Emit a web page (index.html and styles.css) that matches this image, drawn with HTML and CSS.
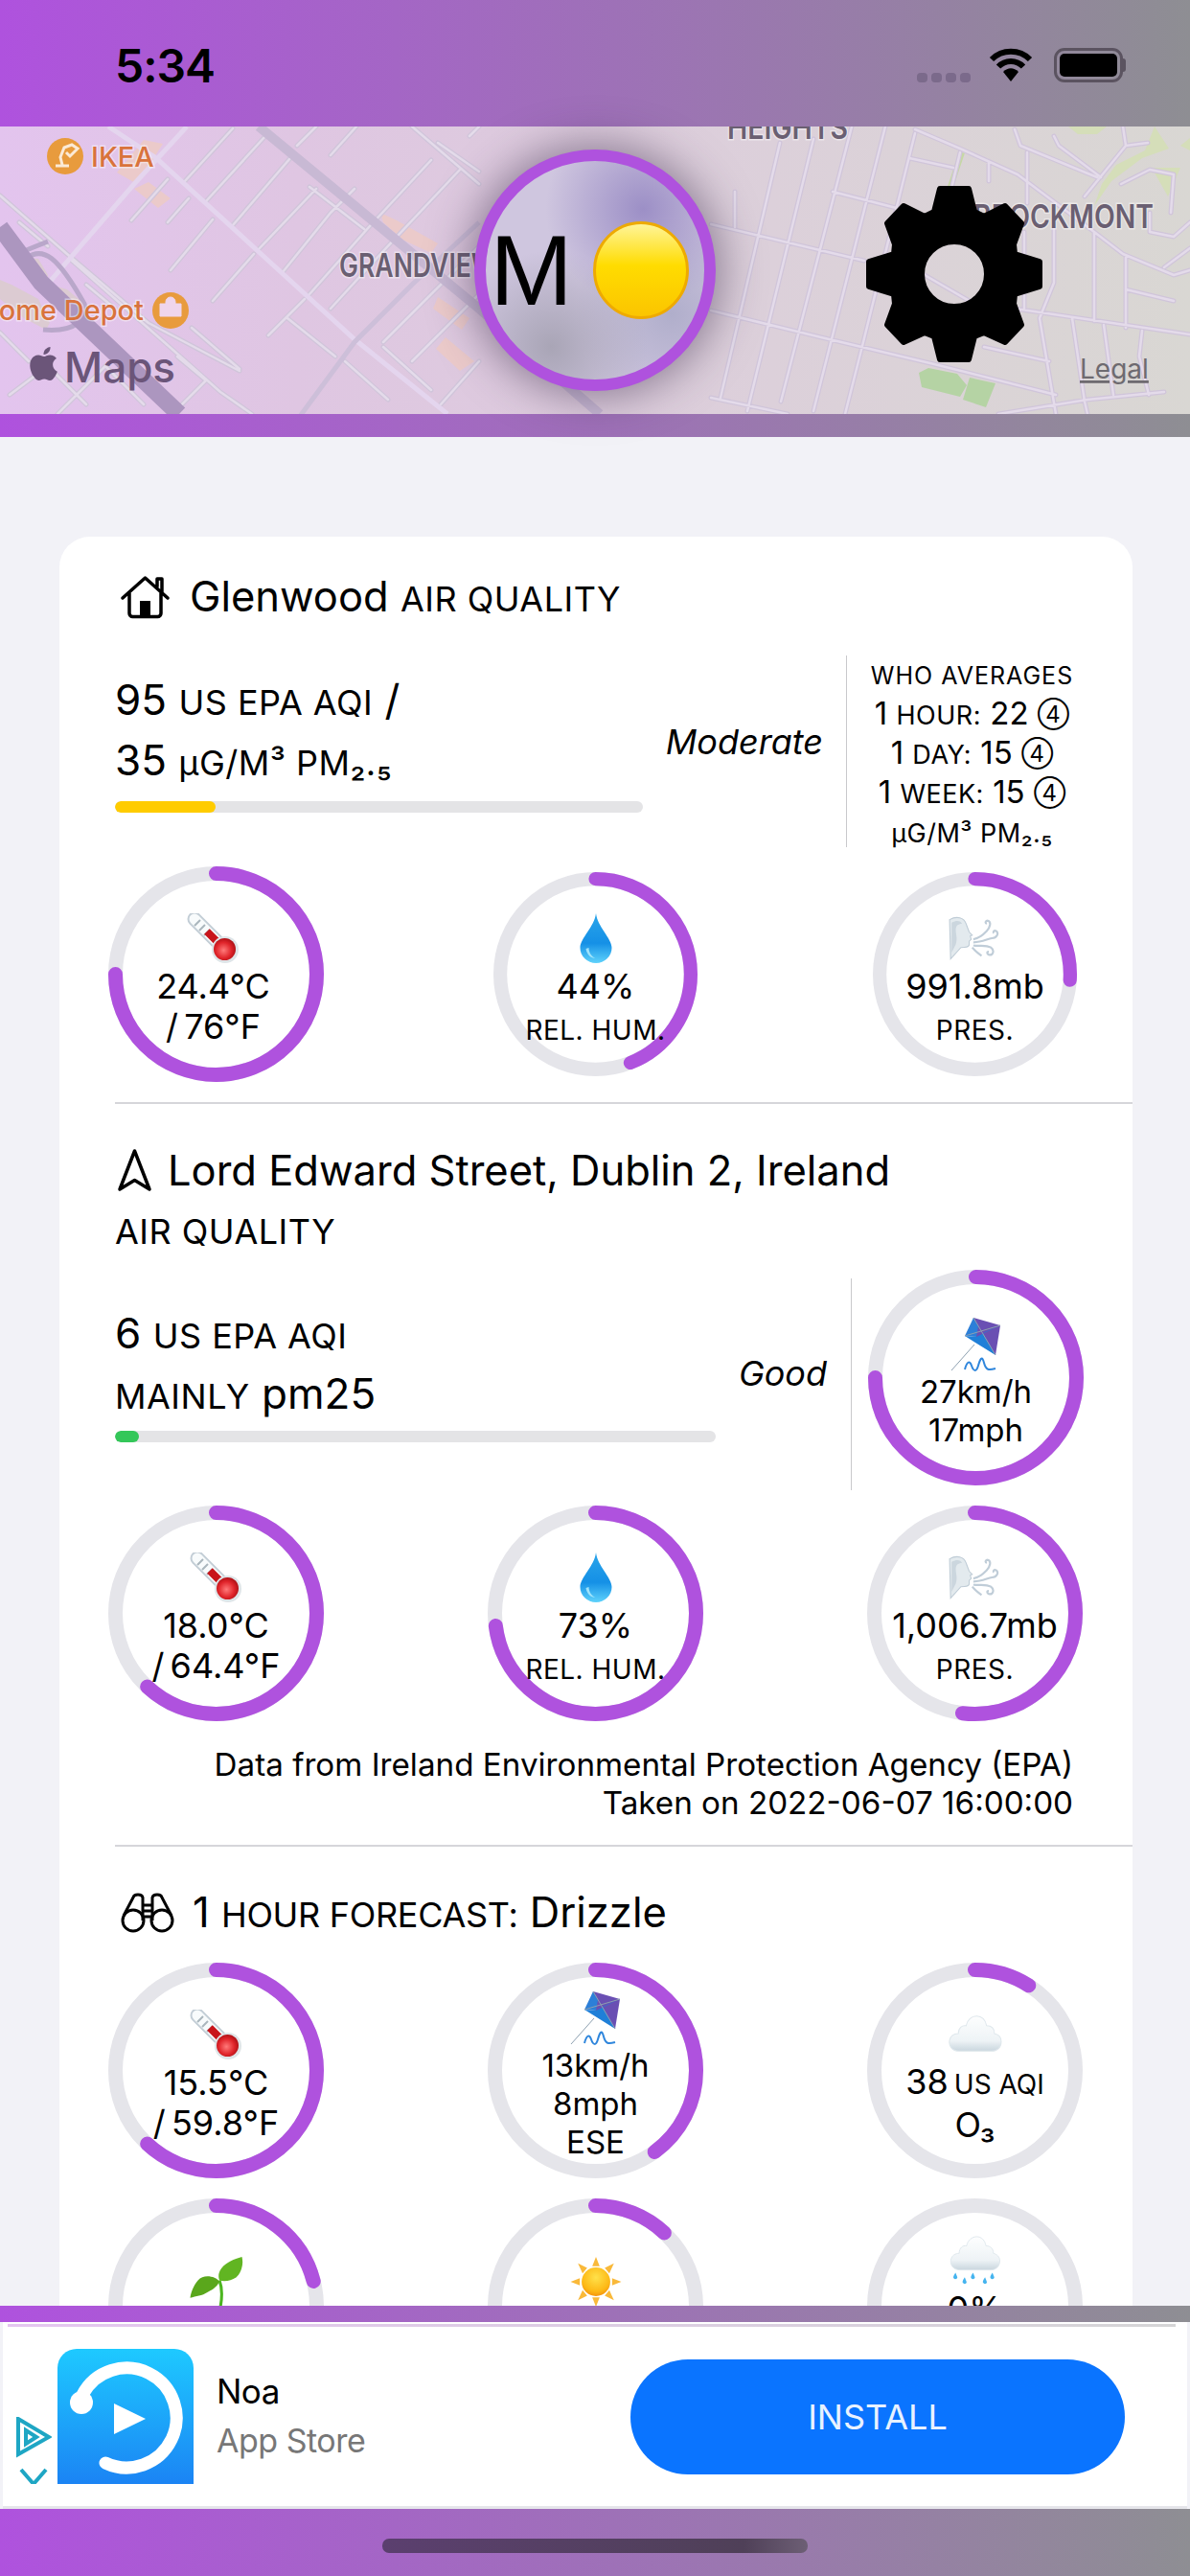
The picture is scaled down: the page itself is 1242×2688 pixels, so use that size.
FILE: index.html
```html
<!DOCTYPE html>
<html lang="en">
<head>
    <meta charset="UTF-8">
    <meta name="viewport" content="width=device-width, initial-scale=1.0">
    <title>Air Quality</title>
    <link rel="stylesheet" href="styles.css">
</head>
<body>
    <!-- shared icons -->
    <svg class="sprite" width="0" height="0">
        <defs>
            <linearGradient id="drop-fill" x1="0" y1="0" x2="0" y2="1"><stop offset="0" stop-color="#2aa5ea"/><stop offset="0.6" stop-color="#1590e6"/><stop offset="1" stop-color="#5fd2fb"/></linearGradient>
            <radialGradient id="bulb-fill" cx="0.45" cy="0.55" r="0.6"><stop offset="0" stop-color="#ff7a7a"/><stop offset="0.6" stop-color="#e0242a"/><stop offset="1" stop-color="#a50d12"/></radialGradient>
            <linearGradient id="cloud-fill" x1="0" y1="0" x2="0" y2="1"><stop offset="0" stop-color="#fdfefe"/><stop offset="0.7" stop-color="#eef3f6"/><stop offset="1" stop-color="#c9d6de"/></linearGradient>
            <radialGradient id="sun-fill" cx="0.5" cy="0.35" r="0.7"><stop offset="0" stop-color="#ffe14a"/><stop offset="0.7" stop-color="#fdb815"/><stop offset="1" stop-color="#f28a0c"/></radialGradient>
            <linearGradient id="moon-fill" x1="0" y1="0" x2="0" y2="1"><stop offset="0" stop-color="#fff59d"/><stop offset="0.45" stop-color="#ffdc00"/><stop offset="1" stop-color="#fbc400"/></linearGradient>
            <linearGradient id="noa-fill" x1="0" y1="0" x2="0" y2="1"><stop offset="0" stop-color="#1ec9ff"/><stop offset="1" stop-color="#1b84f4"/></linearGradient>
            <path id="streets" d="M137 98 175 55M175 100 197 75M192 58 243 2M215 78 277 10M243 103 303 33M270 128 330 65M178 150 222 97M222 182 265 133M295 152 345 90 370 65M323 175 385 105 450 35M345 190 400 130 480 45M280 218 318 180M310 20 330 0M345 30 372 0M400 225 460 165 500 125M430 245 500 175M460 290 500 245M490 10 500 0
                M0 72 70 133 155 205 250 255M75 140 177 230 230 277 263 300M200 210 250 253M300 200 350 240M323 63 380 107M457 17 500 47M430 0 500 60M20 100 50 125M90 165 120 190M0 215 30 245M10 280 50 250 90 290M60 300 110 250 150 290M185 240 215 265 180 300M400 230 450 275M360 245 405 285
                M814 17 752 283M849 13 780 297M889 0 815 287M924 0 849 297M955 7 899 233 882 300M1002 27 987 90M767 68 767 105
                M742 102 902 140M965 155 1060 210M742 192 857 220 975 248 1102 280M742 283 822 300M869 68 955 90M949 33 995 43M955 3 1002 23 1062 50 1142 110 1172 133 1225 155 1242 150
                M1059 3 1065 20 1145 53M1100 10 1105 20 1149 53M1172 0 1175 20 1132 73M1175 20 1198 17M1032 37 1032 57M1072 27 1072 80M1142 110 1142 203M1175 137 1175 210M1100 107 1100 163 1085 200 1102 300M1069 110 1069 190M1059 190 1242 217M1175 170 1225 182M1027 230 1095 245M1042 300 1135 285 1215 277M1119 200 1132 287 1135 300M1152 207 1162 280M1192 213 1189 240 1199 280M1215 147 1242 127M1170 60 1200 45 1225 50 1222 90M1200 90 1200 110 1225 115 1242 100"/>

            <symbol id="i-thermo" viewBox="0 0 52 52">
                <path d="M6 6 38 38" stroke="#c3ced6" stroke-width="15" stroke-linecap="round"/>
                <path d="M6 6 38 38" stroke="#f8fbfc" stroke-width="11" stroke-linecap="round"/>
                <path d="M6 13l6-6M11 18l6-6M16 23l6-6" stroke="#aab6bd" stroke-width="2"/>
                <path d="M19 19 38 38" stroke="#c8141b" stroke-width="8"/>
                <circle cx="38" cy="38" r="14" fill="#dfe5e8"/>
                <circle cx="37.500" cy="37.500" r="11.500" fill="url(#bulb-fill)"/>
            </symbol>
            <symbol id="i-drop" viewBox="0 0 33 52">
                <path fill="url(#drop-fill)" d="M16.500 0C18 14 33 26 33 36A16.500 16 0 0 1 0 36C0 26 15 14 16.500 0Z"/>
                <path fill="#9fe3fb" d="M6 37c1 6 5 10 10 10-4-2-7-6-7-11z"/>
            </symbol>
            <symbol id="i-wind" viewBox="0 0 52 42">
                <path fill="#e3eaee" stroke="#bfccd6" d="M1 3C8-1 15 1 17 7c1 3 2 5 3 8l3 3-2 1 1 3-2 2v3c0 3-4 3-8 3L2 41z"/>
                <path fill="#cbd6de" d="M3 6c5-3 9-2 10 1-4 0-6 2-6 6s2 8 0 14l-4 8z"/>
                <path fill="none" stroke="#c0cdd8" stroke-width="2" d="M24 22c6-1 9-4 13-8 3-3 5-9 1-10-2 0-3 2-1 3M24 25c8 0 13-3 18-4 5 0 7-5 4-7-2-1-3 1-2 2M24 28c6 1 12-1 17 2 4 3 2 8-2 7-2-1-2-3 0-3M23 30c3 4 6 6 9 8"/>
            </symbol>
            <symbol id="i-kite" viewBox="0 0 52 56">
                <path fill="#6a4fb3" d="M23 0 51 8 46 39 26 20z"/>
                <path fill="#2c7fd8" d="M23 0 14 19 26 20 28 9z"/>
                <path fill="#1f7fd8" d="M14 19 46 39 33 16 51 8 26 20z"/>
                <path stroke="#8da0b0" stroke-width="1" fill="none" d="M24 28 0 55M23 0 46 39M14 19 51 8"/>
                <path fill="none" stroke="#2f86dc" stroke-width="2" d="M14 54c2-8 5-10 7-4s5 7 7 0 4-11 6-3 5 8 12 6"/>
            </symbol>
            <symbol id="i-cloud" viewBox="0 0 55 38">
                <path fill="url(#cloud-fill)" stroke="#dfe7ec" d="M11 37C3 37 0 31 1 26c1-5 5-7 9-7 0-6 4-9 8-8 1-6 6-10 11-10s9 4 10 10c5 0 8 3 8 8 4 1 7 4 7 8 0 6-4 10-10 10z"/>
            </symbol>
            <symbol id="i-rain" viewBox="0 0 55 54">
                <path fill="url(#cloud-fill)" stroke="#dfe7ec" d="M11 37C3 37 0 31 1 26c1-5 5-7 9-7 0-6 4-9 8-8 1-6 6-10 11-10s9 4 10 10c5 0 8 3 8 8 4 1 7 4 7 8 0 6-4 10-10 10z"/>
                <path fill="#45b4ef" d="M6 40c-2 3-3 5-2 6 1 2 4 1 4-1zM16 45c-2 3-3 5-2 6 1 2 4 1 4-1zM25 40c-2 3-3 5-2 6 1 2 4 1 4-1zM38 45c-2 3-3 5-2 6 1 2 4 1 4-1zM46 40c-2 3-3 5-2 6 1 2 4 1 4-1z"/>
            </symbol>
            <symbol id="i-sprout" viewBox="0 0 54 51">
                <path fill="none" stroke="#4bb51f" stroke-width="3" d="M31 51C33 40 33 32 30 24"/>
                <path fill="#5aa71c" d="M30 25C26 20 14 17 8 24 3 30 1 36 0 42c6-2 12-2 18-6 6-3 10-6 12-11z"/>
                <path fill="#61b522" d="M30 24c-3-7 1-18 23-24 2 8-1 17-6 21-5 3-11 5-17 3z"/>
            </symbol>
            <symbol id="i-sun" viewBox="0 0 55 54">
                <path fill="#f9b93a" d="M27.500 0l4 10h-8zM27.500 54l4-10h-8zM0 27l10-4v8zM55 27l-10-4v8zM8 7l10 5-5 6zM47 7l-10 5 5 6zM8 47l10-5-5-6zM47 47l-10-5 5-6z"/>
                <circle cx="27.500" cy="27" r="15.500" fill="url(#sun-fill)"/>
            </symbol>
        </defs>
    </svg>

    <div class="phone">
        <header class="status-bar">
            <span class="clock">5:34</span>
            <div class="status-icons">
                <div class="signal"><i></i><i></i><i></i><i></i></div>
                <svg class="wifi" viewBox="0 0 46 36">
                    <path d="M3 12C14 1 32 1 43 12M10 19.500C17 12 29 12 36 19.500" fill="none" stroke="#000" stroke-width="6"/>
                    <path d="M15 25C20 20 26 20 31 25L23 35Z" fill="#000"/>
                </svg>
                <div class="battery"><div class="battery-level"></div></div>
                <div class="battery-cap"></div>
            </div>
        </header>

        <section class="map-header">
            <svg class="map-art" viewBox="0 0 1242 300">
                <!-- parks and building patches -->
                <path class="park-pale" d="M1115 0H1155L1145 8H1125ZM1205 0 1220 23 1192 33 1160 57 1142 83 1150 60 1165 40 1195 25ZM1202 43H1232L1219 73ZM1232 20 1242 12V25Z"/>
                <path d="M1004 27 992 63" stroke="#c6d8a5" stroke-width="6"/>
                <path class="park" d="M959 257 969 252 999 258 1009 270 1002 282 962 272ZM1012 262 1039 268 1029 293 1005 285Z"/>
                <path class="patch" d="M122 48 150 14 170 18 143 60ZM140 65 155 58 178 75 165 85ZM397 90 414 98 457 122 450 132 420 118 400 100ZM457 178 490 200 482 212 452 190ZM465 220 495 245 480 255 455 232Z"/>
                <path d="M28 137 40 138 50 155 48 165 35 155ZM52 165 70 170 88 185 75 205 60 190ZM0 160 12 165 40 180 52 205 48 212 25 200 0 180Z" fill="#dccbd2"/>
                <!-- streets -->
                <use href="#streets" class="road-edge"/>
                <use href="#streets" class="road-fill"/>
                <path class="road-wide" d="M113 0 163 33 267 128 370 222 467 300"/>
                <path class="road-wide" d="M45 170 140 60 195 0"/>
                <path class="road-mid" d="M300 320 370 225 430 165 500 100"/>
                <path class="road-ring" d="M28 137C45 125 60 135 88 185 92 200 80 215 45 212M25 130 50 120"/>
                <path class="road-highway" d="M270 0 500 190 626 300"/>
                <path class="road-freeway" d="M0 105 43 163 187 300"/>
                <!-- labels -->
                <circle cx="68" cy="31" r="19" fill="#e89b3d"/>
                <path d="M58 41h14M65 40l-2-8 4-10 8-3 6 4-8 8-4-4" fill="none" stroke="#fbead6" stroke-width="3"/>
                <text class="label poi" x="95" y="42">IKEA</text>
                <text class="label poi" x="150" y="202" text-anchor="end">Home Depot</text>
                <circle cx="178" cy="192" r="19" fill="#e89b3d"/>
                <path d="M167 185h22v13h-22zM173 185v-2a5 5 0 0 1 10 0v2" fill="#efd5ec" stroke="#efd5ec" stroke-width="1"/>
                <text class="label place" x="354" y="157" textLength="165" lengthAdjust="spacingAndGlyphs">GRANDVIEW</text>
                <text class="label place" x="759" y="13" textLength="126" lengthAdjust="spacingAndGlyphs">HEIGHTS</text>
                <text class="label place" x="1016" y="106" textLength="188" lengthAdjust="spacingAndGlyphs">BROCKMONT</text>
                <g class="maps-mark">
                    <svg x="26" y="228" width="41" height="41" viewBox="0 0 24 24"><path d="M17.050 12.040c-.03-2.600 2.120-3.850 2.220-3.910-1.210-1.770-3.090-2.010-3.760-2.040-1.600-.16-3.120.94-3.930.94-.81 0-2.060-.92-3.390-.89-1.740.03-3.350 1.010-4.250 2.570-1.810 3.140-.46 7.800 1.300 10.350.86 1.250 1.890 2.650 3.240 2.600 1.300-.05 1.790-.84 3.360-.84 1.570 0 2.010.84 3.390.81 1.400-.02 2.280-1.270 3.140-2.530.99-1.450 1.390-2.850 1.420-2.920-.03-.01-2.720-1.040-2.740-4.140zM14.460 4.400c.72-.87 1.200-2.080 1.070-3.280-1.030.04-2.280.69-3.020 1.560-.66.77-1.240 2-1.090 3.180 1.150.09 2.320-.58 3.040-1.460z"/></svg>
                    <text x="67" y="267">Maps</text>
                </g>
                <text class="legal" x="1127" y="263">Legal</text>
            </svg>
            <div class="avatar">
                <span class="avatar-letter">M</span>
                <svg class="moon" viewBox="0 0 100 102"><ellipse cx="50" cy="51" rx="48.500" ry="49.500" fill="url(#moon-fill)" stroke="#eeaa00" stroke-width="3"/></svg>
            </div>
            <svg class="gear" viewBox="-93 -93 186 186">
                <path fill-rule="evenodd" stroke="#000" stroke-width="6" stroke-linejoin="round" d="M-21-65-15-89 15-89 21-65 31-60 53-71 70-53 62-31 63-21 89-13 89 13 63 21 62 31 70 53 53 71 31 61 21 65 15 89-15 89-21 65-31 61-53 71-70 53-62 31-63 21-89 13-89-13-63-21-62-31-70-53-53-71-31-60ZM34 0A34 34 0 1 0-34 0 34 34 0 1 0 34 0Z"/>
            </svg>
        </section>
        <div class="band band-map"></div>

        <main class="content">
            <div class="card">
                <section class="block">
                    <h2 class="block-title">
                        <svg class="icon-house" viewBox="0 0 51 46"><path d="M2 24 25.500 3 49 24M38 12V4h5v14M9 19V40a3.500 3.500 0 0 0 3.500 3.500h26A3.500 3.500 0 0 0 42 40V19" fill="none" stroke="#000" stroke-width="3.500" stroke-linecap="round" stroke-linejoin="round"/><rect x="20" y="27" width="11" height="16" fill="#000"/></svg>
                        <span>Glenwood <span class="sc">AIR QUALITY</span></span>
                    </h2>
                    <div class="aqi-row aqi-row-who">
                        <div class="aqi-main">
                            <div class="aqi-figures">
                                <p class="aqi-line">95 <span class="sc">US EPA AQI</span> /</p>
                                <p class="aqi-line">35 <span class="sc">µG/M³ PM₂.₅</span></p>
                                <div class="meter"><div class="meter-fill fill-moderate" style="width: 19%"></div></div>
                            </div>
                            <em class="rating">Moderate</em>
                        </div>
                        <div class="who">
                            <div class="who-title">WHO AVERAGES</div>
                            <div>1 <span class="sc">HOUR:</span> 22 <span class="circled">④</span></div>
                            <div>1 <span class="sc">DAY:</span> 15 <span class="circled">④</span></div>
                            <div>1 <span class="sc">WEEK:</span> 15 <span class="circled">④</span></div>
                            <div class="who-unit sc">µG/M³ PM₂.₅</div>
                        </div>
                    </div>
                    <div class="gauges gauges-first">
                        <div class="gauge">
                            <svg class="ring" viewBox="0 0 225 225"><circle class="track" cx="112.500" cy="112.500" r="105"/><circle class="value" cx="112.500" cy="112.500" r="105" pathLength="100" stroke-dasharray="75 100" transform="rotate(-90 112.500 112.500)"/></svg>
                            <div class="gauge-body gauge-body-left"><svg class="emoji"><use href="#i-thermo"/></svg><div>24.4°C</div><div>/ 76°F</div></div>
                        </div>
                        <div class="gauge gauge-small">
                            <svg class="ring" viewBox="0 0 225 225"><circle class="track" cx="112.500" cy="112.500" r="105"/><circle class="value" cx="112.500" cy="112.500" r="105" pathLength="100" stroke-dasharray="44 100" transform="rotate(-90 112.500 112.500)"/></svg>
                            <div class="gauge-body"><svg class="emoji"><use href="#i-drop"/></svg><div>44%</div><div class="gauge-label">REL. HUM.</div></div>
                        </div>
                        <div class="gauge gauge-small">
                            <svg class="ring" viewBox="0 0 225 225"><circle class="track" cx="112.500" cy="112.500" r="105"/><circle class="value" cx="112.500" cy="112.500" r="105" pathLength="100" stroke-dasharray="26 100" transform="rotate(-90 112.500 112.500)"/></svg>
                            <div class="gauge-body"><svg class="emoji"><use href="#i-wind"/></svg><div>991.8mb</div><div class="gauge-label">PRES.</div></div>
                        </div>
                    </div>
                </section>

                <section class="block">
                    <h2 class="block-title">
                        <svg class="icon-arrow" viewBox="0 0 37 46"><path d="M18.500 3 34 43 18.500 33.500 3 43Z" fill="none" stroke="#000" stroke-width="3.500" stroke-linejoin="round"/></svg>
                        <span>Lord Edward Street, Dublin 2, Ireland</span>
                    </h2>
                    <div class="block-sub sc">AIR QUALITY</div>
                    <div class="aqi-row aqi-row-wind">
                        <div class="aqi-main">
                            <div class="aqi-figures aqi-figures-wide">
                                <p class="aqi-line">6 <span class="sc">US EPA AQI</span></p>
                                <p class="aqi-line"><span class="sc">MAINLY</span> pm25</p>
                                <div class="meter"><div class="meter-fill fill-good" style="width: 4%"></div></div>
                            </div>
                            <em class="rating">Good</em>
                        </div>
                        <div class="gauge gauge-wind">
                            <svg class="ring" viewBox="0 0 225 225"><circle class="track" cx="112.500" cy="112.500" r="105"/><circle class="value" cx="112.500" cy="112.500" r="105" pathLength="100" stroke-dasharray="75 100" transform="rotate(-90 112.500 112.500)"/></svg>
                            <div class="gauge-body tight"><svg class="emoji emoji-tall"><use href="#i-kite"/></svg><div>27km/h</div><div>17mph</div></div>
                        </div>
                    </div>
                    <div class="gauges">
                        <div class="gauge">
                            <svg class="ring" viewBox="0 0 225 225"><circle class="track" cx="112.500" cy="112.500" r="105"/><circle class="value" cx="112.500" cy="112.500" r="105" pathLength="100" stroke-dasharray="62 100" transform="rotate(-90 112.500 112.500)"/></svg>
                            <div class="gauge-body"><svg class="emoji"><use href="#i-thermo"/></svg><div>18.0°C</div><div>/ 64.4°F</div></div>
                        </div>
                        <div class="gauge">
                            <svg class="ring" viewBox="0 0 225 225"><circle class="track" cx="112.500" cy="112.500" r="105"/><circle class="value" cx="112.500" cy="112.500" r="105" pathLength="100" stroke-dasharray="73 100" transform="rotate(-90 112.500 112.500)"/></svg>
                            <div class="gauge-body"><svg class="emoji"><use href="#i-drop"/></svg><div>73%</div><div class="gauge-label">REL. HUM.</div></div>
                        </div>
                        <div class="gauge">
                            <svg class="ring" viewBox="0 0 225 225"><circle class="track" cx="112.500" cy="112.500" r="105"/><circle class="value" cx="112.500" cy="112.500" r="105" pathLength="100" stroke-dasharray="52 100" transform="rotate(-90 112.500 112.500)"/></svg>
                            <div class="gauge-body"><svg class="emoji"><use href="#i-wind"/></svg><div>1,006.7mb</div><div class="gauge-label">PRES.</div></div>
                        </div>
                    </div>
                    <p class="source">Data from Ireland Environmental Protection Agency (EPA)<br>Taken on 2022-06-07 16:00:00</p>
                </section>

                <section class="block block-forecast">
                    <h2 class="block-title">
                        <svg class="icon-binoculars" viewBox="0 0 56 42"><g fill="none" stroke="#000" stroke-width="3"><circle cx="13" cy="29" r="11"/><circle cx="43" cy="29" r="11"/><path d="M3 24 13 5c1-4 9-4 10 0v24M53 24 43 5c-1-4-9-4-10 0v24M23 13h10M23 19h10M23 25h10"/></g></svg>
                        <span>1 <span class="sc sc-tight">HOUR FORECAST:</span> Drizzle</span>
                    </h2>
                    <div class="gauges">
                        <div class="gauge">
                            <svg class="ring" viewBox="0 0 225 225"><circle class="track" cx="112.500" cy="112.500" r="105"/><circle class="value" cx="112.500" cy="112.500" r="105" pathLength="100" stroke-dasharray="62 100" transform="rotate(-90 112.500 112.500)"/></svg>
                            <div class="gauge-body"><svg class="emoji"><use href="#i-thermo"/></svg><div>15.5°C</div><div>/ 59.8°F</div></div>
                        </div>
                        <div class="gauge">
                            <svg class="ring" viewBox="0 0 225 225"><circle class="track" cx="112.500" cy="112.500" r="105"/><circle class="value" cx="112.500" cy="112.500" r="105" pathLength="100" stroke-dasharray="40 100" transform="rotate(-90 112.500 112.500)"/></svg>
                            <div class="gauge-body tight"><svg class="emoji emoji-tall"><use href="#i-kite"/></svg><div>13km/h</div><div>8mph</div><div>ESE</div></div>
                        </div>
                        <div class="gauge">
                            <svg class="ring" viewBox="0 0 225 225"><circle class="track" cx="112.500" cy="112.500" r="105"/><circle class="value" cx="112.500" cy="112.500" r="105" pathLength="100" stroke-dasharray="9 100" transform="rotate(-90 112.500 112.500)"/></svg>
                            <div class="gauge-body"><svg class="emoji"><use href="#i-cloud"/></svg><div>38 <span class="sc-small">US AQI</span></div><div>O₃</div></div>
                        </div>
                    </div>
                    <div class="gauges">
                        <div class="gauge">
                            <svg class="ring" viewBox="0 0 225 225"><circle class="track" cx="112.500" cy="112.500" r="105"/><circle class="value" cx="112.500" cy="112.500" r="105" pathLength="100" stroke-dasharray="21 100" transform="rotate(-90 112.500 112.500)"/></svg>
                            <div class="gauge-body gauge-body-low"><svg class="emoji"><use href="#i-sprout"/></svg></div>
                        </div>
                        <div class="gauge">
                            <svg class="ring" viewBox="0 0 225 225"><circle class="track" cx="112.500" cy="112.500" r="105"/><circle class="value" cx="112.500" cy="112.500" r="105" pathLength="100" stroke-dasharray="12 100" transform="rotate(-90 112.500 112.500)"/></svg>
                            <div class="gauge-body gauge-body-low"><svg class="emoji"><use href="#i-sun"/></svg></div>
                        </div>
                        <div class="gauge">
                            <svg class="ring" viewBox="0 0 225 225"><circle class="track" cx="112.500" cy="112.500" r="105"/></svg>
                            <div class="gauge-body gauge-body-high"><svg class="emoji"><use href="#i-rain"/></svg><div>0%</div></div>
                        </div>
                    </div>
                </section>
            </div>
        </main>

        <div class="band band-ad"></div>
        <aside class="ad">
            <div class="ad-rule"></div>
            <div class="ad-creative">
                <svg class="ad-choices" viewBox="0 0 38 70">
                    <g fill="none" stroke="#1ea6c4" stroke-width="4"><path d="M3 2 35 21 3 39ZM11 14V28L22 21Z"/><path d="M6 55 19 70 32 55"/></g>
                </svg>
                <svg class="ad-icon" viewBox="0 0 142 141">
                    <path d="M0 141V20A20 20 0 0 1 20 0H122A20 20 0 0 1 142 20V141Z" fill="url(#noa-fill)"/>
                    <path d="M26 48A52 52 0 1 1 50 119" fill="none" stroke="#fff" stroke-width="13" stroke-linecap="round"/>
                    <circle cx="25" cy="56" r="12" fill="#fff"/>
                    <path d="M59 57 92 73 59 89Z" fill="#fff"/>
                </svg>
                <div class="ad-copy">
                    <div class="ad-name">Noa</div>
                    <div class="ad-store">App Store</div>
                </div>
                <button class="ad-install">INSTALL</button>
            </div>
        </aside>
        <footer class="home-band"><div class="home-indicator"></div></footer>
    </div>
</body>
</html>
```

FILE: styles.css
```css
* { box-sizing: border-box; }
body { margin: 0; background: #f2f2f7; font-family: Inter, "DejaVu Sans", sans-serif; color: #000; }
p, h2 { margin: 0; font-weight: 400; }
.sprite { position: absolute; }
.phone { width: 1242px; height: 2688px; display: flex; flex-direction: column; overflow: hidden; }

/* purple to grey bands */
.status-bar, .band, .home-band { background: linear-gradient(90deg, #af52de, #8e8e93); flex: none; }
.status-bar { height: 132px; padding: 4px 67px 0 120px; display: flex; align-items: center; justify-content: space-between; }
.clock { font-size: 48px; font-weight: 600; letter-spacing: -1px; }
.status-icons { display: flex; align-items: center; }
.signal { display: flex; gap: 4px; margin-top: 26px; margin-right: 19px; }
.signal i { width: 11px; height: 10px; border-radius: 4px; background: #7b6a8b; }
.wifi { width: 46px; height: 36px; margin-right: 22px; }
.battery { width: 72px; height: 36px; padding: 3px; border: 3px solid #5b5360; border-radius: 11px; }
.battery-level { height: 100%; background: #000; border-radius: 5px; }
.battery-cap { width: 3px; height: 14px; background: #5b5360; border-radius: 0 3px 3px 0; }
.band-map { height: 24px; }
.band-ad { height: 17px; position: relative; }

/* map */
.map-header { height: 300px; flex: none; position: relative; background: linear-gradient(90deg, #e3c4ee, #dfc6e2 25%, #dcd0da 65%, #d9d7d3); }
.map-art { display: block; width: 1242px; height: 300px; }
.road-edge { stroke: #d0c5da; stroke-width: 5; fill: none; stroke-linecap: round; stroke-linejoin: round; }
.road-fill { stroke: #e4dbea; stroke-width: 2.500; fill: none; stroke-linecap: round; stroke-linejoin: round; }
.road-wide { stroke: #e4d5ee; stroke-width: 5; fill: none; }
.road-mid { stroke: #cdbfd9; stroke-width: 5; fill: none; }
.road-ring { stroke: #b9a7ca; stroke-width: 5; fill: none; }
.road-highway { stroke: #c8b9d4; stroke-width: 10; fill: none; }
.road-freeway { stroke: #ac96bf; stroke-width: 18; fill: none; }
.park { fill: #b5d3a4; }
.park-pale { fill: #d5deb9; }
.patch { fill: #ebcaca; }
.label { paint-order: stroke; stroke: rgba(255, 255, 255, .45); stroke-width: 3px; }
.poi { font-size: 29px; font-weight: 500; fill: #d9733c; }
.place { font-size: 34px; font-weight: 600; fill: #6a5f72; }
.maps-mark { fill: #6b5579; font-size: 44px; font-weight: 500; }
.legal { font-size: 28px; fill: #6e6a70; text-decoration: underline; }
.avatar { position: absolute; left: 495px; top: 24px; width: 252px; height: 252px; border: 12px solid #af52de; border-radius: 50%; padding-right: 12px; display: flex; align-items: center; justify-content: center; gap: 21px; box-shadow: 0 0 44px 6px rgba(60, 45, 75, .5); background: radial-gradient(circle at 72% 22%, #9c8fc6, transparent 42%), radial-gradient(circle at 30% 85%, #a9a5b6, transparent 40%), radial-gradient(circle at 85% 70%, #b0aecb, transparent 40%), #cfc6df; }
.avatar-letter { font-family: "Liberation Sans", sans-serif; font-size: 104px; line-height: 1; }
.moon { width: 100px; height: 102px; flex: none; }
.gear { position: absolute; left: 903px; top: 61px; width: 186px; height: 186px; }

/* card */
.content { flex: 1; min-height: 0; overflow: hidden; padding: 104px 60px 0 62px; }
.card { background: #fff; border-radius: 32px; padding-left: 58px; }
.block { border-bottom: 2px solid #d6d6da; padding-top: 44px; }
.block:first-child { padding-top: 38px; }
.block-title { display: flex; align-items: center; height: 50px; font-size: 43.500px; line-height: 50px; }
.sc { font-size: 36px; letter-spacing: .5px; }
.sc-tight { letter-spacing: -.3px; }
.icon-house { width: 51px; height: 46px; margin-left: 6px; margin-right: 21px; flex: none; }
.icon-arrow { width: 37px; height: 46px; margin-left: 2px; margin-right: 16px; flex: none; }
.icon-binoculars { width: 56px; height: 42px; margin-left: 6px; margin-right: 19px; flex: none; }
.block-sub { line-height: 40px; margin-top: 19px; }

.aqi-row { display: flex; }
.aqi-row-who { height: 200px; margin-top: 36px; align-items: stretch; }
.aqi-row-wind { height: 225px; margin-top: 20px; }
.aqi-main { flex: 1; display: flex; align-items: center; justify-content: space-between; padding-right: 24px; border-right: 1px solid #c9c9cc; }
.aqi-row-who .aqi-main { padding-bottom: 20px; }
.aqi-row-wind .aqi-main { height: 221px; margin-top: 9px; padding-right: 25px; padding-bottom: 23px; flex: none; width: 769px; margin-right: 17px; }
.aqi-figures { width: 551px; }
.aqi-figures-wide { width: 627px; }
.aqi-line { font-size: 44px; line-height: 60px; white-space: nowrap; }
.meter { height: 12px; border-radius: 6px; background: #e4e4e6; margin-top: 10px; overflow: hidden; }
.aqi-figures-wide .meter { margin-top: 6px; }
.meter-fill { height: 100%; border-radius: 6px; }
.fill-moderate { background: #ffcc00; }
.fill-good { background: #34c759; }
.rating { font-size: 36px; white-space: nowrap; }
.who { width: 261px; margin-right: 37px; text-align: center; font-size: 33px; line-height: 39px; white-space: nowrap; padding-top: 2px; }
.who .sc { font-size: 27px; }
.who .who-unit { margin-top: 2px; }
.circled { font-size: 24px; vertical-align: 2px; }
.who-title { font-size: 25px; letter-spacing: 1px; }

/* ring gauges */
.gauges { margin-left: -7px; width: 1017px; display: grid; grid-template-columns: repeat(3, 225px); justify-content: space-between; align-items: center; justify-items: center; margin-top: 21px; }
.gauges-first { margin-top: 20px; margin-bottom: 21px; }
.gauge { position: relative; width: 225px; height: 225px; flex: none; }
.gauge-small { width: 213px; height: 213px; }
.ring { position: absolute; left: 0; top: 0; width: 100%; height: 100%; }
.track { fill: none; stroke: #e5e5ea; stroke-width: 15; }
.value { fill: none; stroke: #af52de; stroke-width: 15; stroke-linecap: round; }
.gauge-body { position: relative; height: 100%; padding-top: 12px; display: flex; flex-direction: column; align-items: center; justify-content: center; font-size: 36px; line-height: 42px; white-space: nowrap; word-spacing: -4px; }
.gauge-body-left { padding-right: 6px; }
.gauge-body.tight { line-height: 40px; font-size: 33px; }
.gauge-body-low { justify-content: flex-start; padding-top: 61px; }
.gauge-body-high { justify-content: flex-start; padding-top: 39px; overflow: hidden; }
.gauge-label { font-size: 28px; letter-spacing: .5px; word-spacing: 0; margin-top: 4px; margin-bottom: -4px; }
.sc-small { font-size: 28px; word-spacing: 0; }
.emoji { width: 56px; height: 52px; margin-bottom: 3px; flex: none; }
.emoji-tall { height: 56px; margin-bottom: 1px; }
.source { margin-top: 25px; padding-right: 62px; padding-bottom: 24px; text-align: right; font-size: 33.200px; line-height: 40px; }
.block-forecast { border-bottom: 0; }
.block-forecast .block-title + .gauges { margin-top: 27px; }

/* ad */
.ad { height: 195px; flex: none; margin: 0 3px; background: #fff; border-bottom: 3px solid #e5e5ea; }
.home-band { height: 70px; display: flex; justify-content: center; padding-top: 31px; }
.ad-rule { height: 3px; margin: 2px 12px 0 5px; background: linear-gradient(90deg, #e4c6f0, #d5d5d6); }
.ad-creative { display: flex; height: 141px; margin-top: 23px; margin-left: 13px; overflow: hidden; }
.ad-choices { width: 38px; height: 70px; align-self: flex-end; margin-right: 6px; }
.ad-icon { width: 142px; height: 141px; flex: none; }
.ad-copy { margin-left: 24px; padding-top: 22px; }
.ad-name { font-size: 35px; line-height: 44px; letter-spacing: -.5px; }
.ad-store { font-size: 34px; line-height: 44px; margin-top: 8px; color: #777; letter-spacing: -.5px; }
.ad-install { margin-left: auto; margin-right: 65px; margin-top: 11px; width: 516px; height: 120px; border: 0; border-radius: 60px; background: #0a74ff; color: #e8f2ff; font-family: inherit; font-size: 36px; font-weight: 400; }
.home-indicator { width: 444px; height: 15px; border-radius: 7px; background: linear-gradient(90deg, #5b3f6f, #4f4058 85%, #6d5f75); }
```
